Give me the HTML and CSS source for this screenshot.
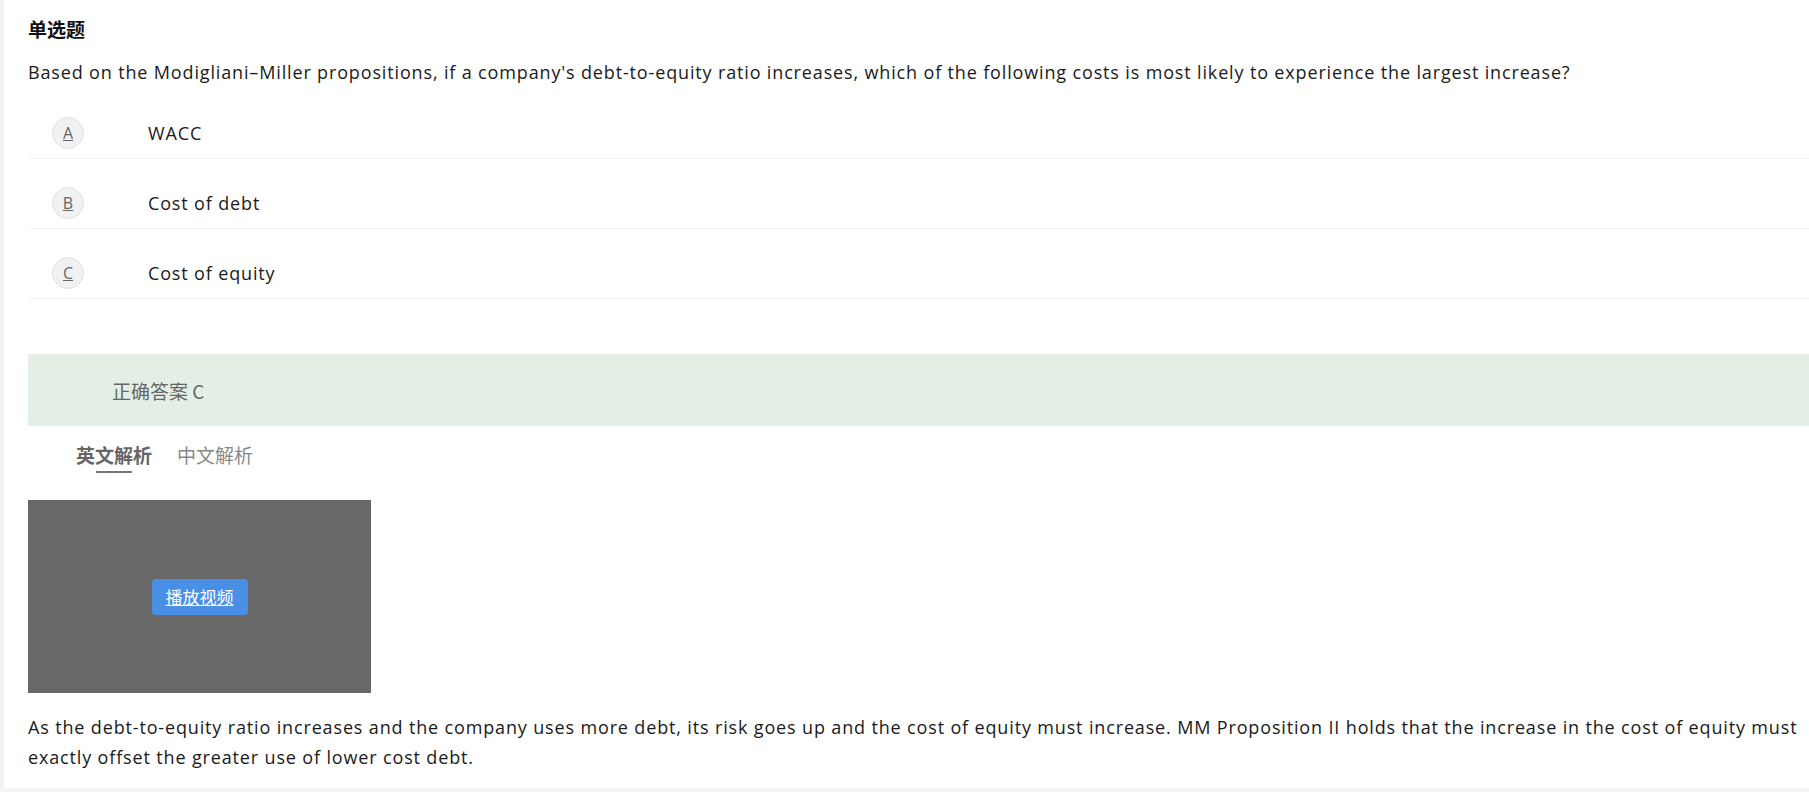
FILE: index.html
```html
<!DOCTYPE html>
<html lang="zh-CN">
<head>
<meta charset="utf-8">
<title>单选题</title>
<link rel="stylesheet" href="styles.css">
</head>
<body>
<div class="card">
  <div class="q-type">单选题</div>
  <div class="q-stem">Based on the Modigliani–Miller propositions, if a company's debt-to-equity ratio increases, which of the following costs is most likely to experience the largest increase?</div>
  <ul class="options">
    <li class="option"><span class="opt-key">A</span><span class="opt-text">WACC</span></li>
    <li class="option"><span class="opt-key">B</span><span class="opt-text">Cost of debt</span></li>
    <li class="option"><span class="opt-key">C</span><span class="opt-text">Cost of equity</span></li>
  </ul>
  <div class="answer">正确答案 C</div>
  <div class="tabs">
    <div class="tab active">英文解析<span class="tab-line"></span></div>
    <div class="tab">中文解析</div>
  </div>
  <div class="video">
    <a class="play-btn">播放视频</a>
  </div>
  <p class="analysis">As the debt-to-equity ratio increases and the company uses more debt, its risk goes up and the cost of equity must increase. MM Proposition II holds that the increase in the cost of equity must exactly offset the greater use of lower cost debt.</p>
</div>
</body>
</html>
```

FILE: styles.css
```css
html, body {
  margin: 0;
  padding: 0;
}
body {
  background: #f3f3f3;
  overflow: hidden;
  font-family: "Open Sans", "Noto Sans CJK SC", sans-serif;
  color: #1a1a1a;
}
.card {
  margin-left: 4px;
  width: 1781px;
  height: 771px;
  background: #ffffff;
  padding: 17px 0 0 24px;
}
.q-type {
  font-family: "Noto Sans CJK SC", sans-serif;
  font-weight: 700;
  font-size: 19px;
  line-height: 24px;
  color: #111;
}
.q-stem {
  margin-top: 16px;
  font-size: 18px;
  letter-spacing: 0.85px;
  line-height: 30px;
  color: #1a1a1a;
}
.options {
  list-style: none;
  margin: 2px 0 0 0;
  padding: 0;
}
.option {
  display: flex;
  align-items: center;
  height: 32px;
  padding: 28px 0 9px 0;
  border-bottom: 1px solid #f3f3f3;
}
.opt-key {
  width: 30px;
  height: 30px;
  margin-left: 24px;
  border-radius: 50%;
  background: #f1f1f4;
  border: 1px solid #e2e2e6;
  display: flex;
  align-items: center;
  justify-content: center;
  font-size: 16px;
  color: #666;
  text-decoration: underline;
}
.opt-text {
  margin-left: 64px;
  font-size: 18px;
  letter-spacing: 0.85px;
  color: #1a1a1a;
}
.answer {
  margin-top: 55px;
  height: 72px;
  display: flex;
  align-items: center;
  padding-left: 84px;
  background: #e3efe5;
  font-family: "Noto Sans CJK SC", sans-serif;
  font-size: 19px;
  color: #666;
}
.tabs {
  display: flex;
  gap: 25px;
  padding-left: 48px;
  margin-top: 15px;
}
.tab {
  display: flex;
  flex-direction: column;
  align-items: center;
  font-family: "Noto Sans CJK SC", sans-serif;
  font-size: 19px;
  line-height: 28px;
  color: #888;
}
.tab.active {
  font-weight: 700;
  color: #666;
}
.tab-line {
  display: block;
  width: 36px;
  height: 2px;
  margin-top: 2px;
  background: #777;
}
.tab:not(.active)::after {
  content: "";
  display: block;
  height: 4px;
}
.video {
  margin-top: 27px;
  width: 343px;
  height: 193px;
  background: #686868;
  display: flex;
  align-items: center;
  justify-content: center;
}
.play-btn {
  display: block;
  padding: 0 14px;
  height: 36px;
  line-height: 36px;
  border-radius: 4px;
  background: #4a8fe6;
  color: #fff;
  font-family: "Noto Sans CJK SC", sans-serif;
  font-size: 17px;
  text-decoration: underline;
}
.analysis {
  margin: 19px 0 0 0;
  font-size: 18px;
  letter-spacing: 0.85px;
  line-height: 30px;
  color: #1a1a1a;
}
```
